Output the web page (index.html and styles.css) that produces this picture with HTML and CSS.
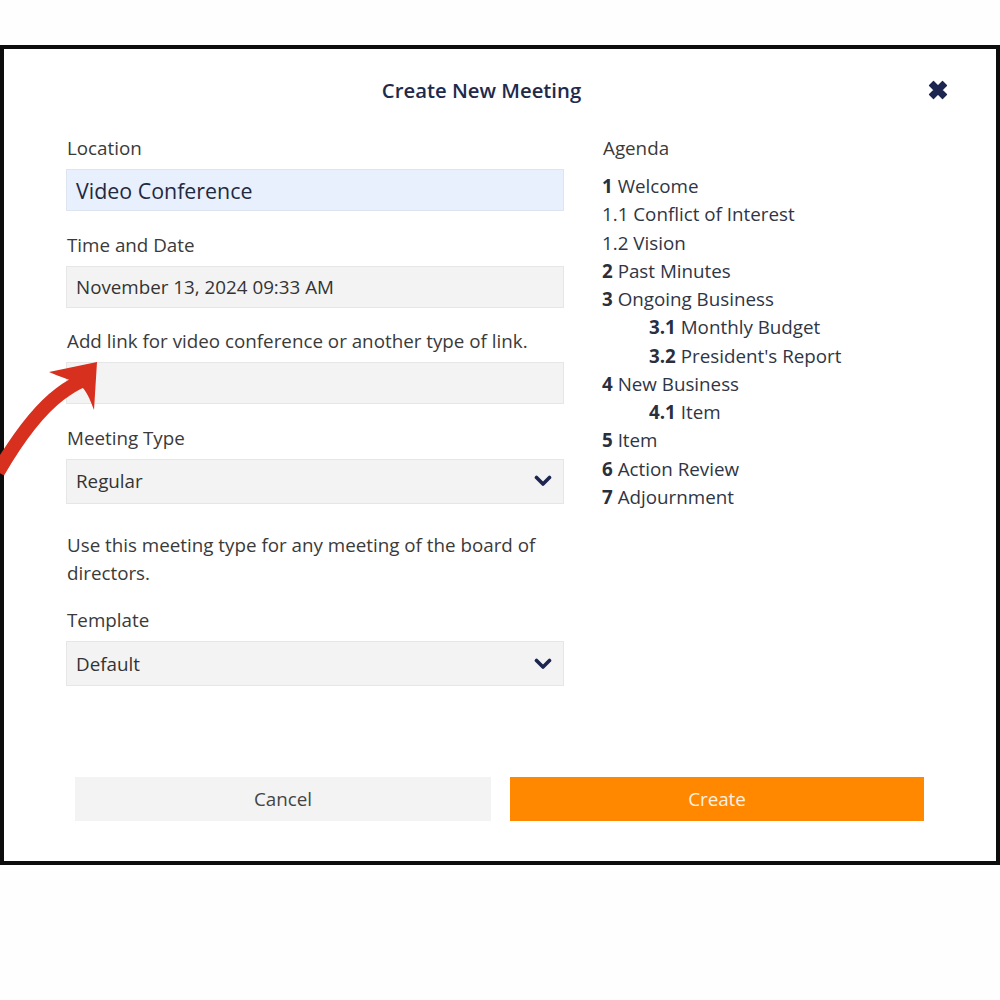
FILE: index.html
```html
<!DOCTYPE html>
<html lang="en">
<head>
<meta charset="utf-8">
<title>Create New Meeting</title>
<link rel="stylesheet" href="styles.css">
</head>
<body>
<div class="page">
  <div class="dialog">
    <div class="header">
      <h1 class="title">Create New Meeting</h1>
      <button class="close" aria-label="Close">
        <svg viewBox="0 0 22 22" width="22" height="22"><path d="M2.5 6.5 6.5 2.5 11 7 15.5 2.5 19.5 6.5 15 11 19.5 15.5 15.5 19.5 11 15 6.5 19.5 2.5 15.5 7 11Z" fill="#1c2650" stroke="#1c2650" stroke-width="1.2" stroke-linejoin="round"/></svg>
      </button>
    </div>
    <div class="body">
      <div class="form">
        <div class="field">
          <label class="label">Location</label>
          <div class="input input-blue input-large">Video Conference</div>
        </div>
        <div class="field">
          <label class="label">Time and Date</label>
          <div class="input">November 13, 2024 09:33 AM</div>
        </div>
        <div class="field">
          <label class="label">Add link for video conference or another type of link.</label>
          <div class="input"></div>
        </div>
        <div class="field">
          <label class="label">Meeting Type</label>
          <div class="input select">Regular
            <svg class="chev" viewBox="0 0 18 12" width="18" height="12"><path d="M2.5 2.5 9 9 15.5 2.5" fill="none" stroke="#1c2650" stroke-width="3.6" stroke-linecap="round" stroke-linejoin="round"/></svg>
          </div>
        </div>
        <p class="desc">Use this meeting type for any meeting of the board of directors.</p>
        <div class="field">
          <label class="label">Template</label>
          <div class="input select">Default
            <svg class="chev" viewBox="0 0 18 12" width="18" height="12"><path d="M2.5 2.5 9 9 15.5 2.5" fill="none" stroke="#1c2650" stroke-width="3.6" stroke-linecap="round" stroke-linejoin="round"/></svg>
          </div>
        </div>
      </div>
      <div class="agenda">
        <div class="label">Agenda</div>
        <ul class="items">
          <li><b>1</b> Welcome</li>
          <li>1.1 Conflict of Interest</li>
          <li>1.2 Vision</li>
          <li><b>2</b> Past Minutes</li>
          <li><b>3</b> Ongoing Business</li>
          <li class="sub"><b>3.1</b> Monthly Budget</li>
          <li class="sub"><b>3.2</b> President's Report</li>
          <li><b>4</b> New Business</li>
          <li class="sub"><b>4.1</b> Item</li>
          <li><b>5</b> Item</li>
          <li><b>6</b> Action Review</li>
          <li><b>7</b> Adjournment</li>
        </ul>
      </div>
    </div>
    <div class="footer">
      <button class="btn btn-cancel">Cancel</button>
      <button class="btn btn-create">Create</button>
    </div>
  </div>
  <svg class="arrow" viewBox="0 0 120 500" width="120" height="500">
    <path d="M-2 472 C 12 448, 36 412, 60 394 C 68 388, 76 383, 84 380" fill="none" stroke="#d7301f" stroke-width="14" stroke-linecap="butt"/>
    <path d="M49 372 L97 362 L94 410 C 90 399, 86 390, 80 385 C 72 380, 60 377, 49 372 Z" fill="#d7301f"/>
  </svg>
</div>
</body>
</html>
```

FILE: styles.css
```css
* { box-sizing: border-box; }
html, body { margin: 0; padding: 0; background: #fefefe; }
body {
  font-family: "Open Sans", "Noto Sans", "Liberation Sans", sans-serif;
  color: #333;
}
.page {
  position: relative;
  width: 1000px;
  height: 1000px;
  padding-top: 45px;
}
.dialog {
  height: 820px;
  border: 4px solid #0d0d0d;
  background: #fff;
  display: flex;
  flex-direction: column;
}
.header {
  display: flex;
  align-items: center;
  padding: 11px 47px 0 0;
  height: 71px;
}
.title {
  flex: 1;
  margin: 0;
  padding-left: 32px;
  text-align: center;
  font-size: 20.3px;
  line-height: 30px;
  font-weight: 600;
  color: #1e2a4c;
}
.close {
  width: 22px;
  height: 22px;
  padding: 0;
  border: 0;
  background: none;
  display: flex;
}
.body {
  display: flex;
  gap: 38px;
  padding: 16px 0 0 62px;
}
.form {
  width: 498px;
  display: flex;
  flex-direction: column;
  gap: 21.6px;
}
.field {
  display: flex;
  flex-direction: column;
  gap: 9px;
}
.label {
  display: block;
  font-size: 18.8px;
  line-height: 24px;
  color: #3a3a3a;
  padding-left: 1px;
}
.input {
  height: 42px;
  background: #f3f3f3;
  border: 1px solid #e6e6e6;
  padding: 0 9px;
  display: flex;
  align-items: center;
  font-size: 18.8px;
  color: #333;
}
.input-blue {
  background: #e8f0fd;
  border-color: #dfe5f0;
}
.input-large {
  font-size: 21.4px;
  color: #1f2940;
}
.select {
  height: 45px;
  justify-content: space-between;
  padding-right: 11px;
}
.chev { display: block; }
.desc {
  margin: 5.5px 0 0;
  font-size: 18.8px;
  line-height: 28px;
  color: #3a3a3a;
  padding-left: 1px;
}
.agenda {
  flex: 1;
}
.items {
  list-style: none;
  margin: 12px 0 0;
  padding: 0;
  font-size: 18.8px;
  line-height: 28.25px;
  color: #2f3545;
}
.items b { font-weight: 700; color: #2a2f3d; }
.items .sub { padding-left: 47px; }
.footer {
  margin-top: auto;
  display: flex;
  gap: 19px;
  padding: 0 72px 40px 71px;
}
.btn {
  flex: 1;
  height: 44px;
  border: 0;
  font-family: inherit;
  font-size: 18.8px;
}
.btn-cancel {
  background: #f3f3f3;
  color: #444;
  flex: 0 0 416px;
}
.btn-create {
  background: #ff8800;
  color: #fff1e2;
}
.arrow {
  position: absolute;
  left: 0;
  top: 0;
  pointer-events: none;
}
```
